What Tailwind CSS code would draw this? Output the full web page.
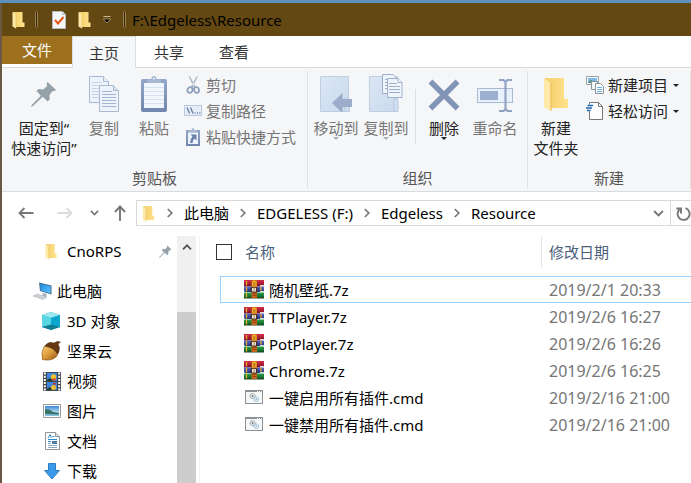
<!DOCTYPE html>
<html lang="zh-CN">
<head>
<meta charset="utf-8">
<meta name="viewport" content="width=device-width, initial-scale=1">
<title>F:\Edgeless\Resource</title>
<script src="https://cdn.jsdelivr.net/npm/@tailwindcss/browser@4"></script>
</head>
<body class="h-screen overflow-hidden bg-white font-['Noto_Sans','Noto_Sans_CJK_SC',sans-serif] text-[15px] leading-5 text-black">
<svg class="absolute h-0 w-0" aria-hidden="true">
  <defs>
    <linearGradient id="fold" x1="0" x2="1"><stop offset="0" stop-color="#f3cc68"/><stop offset="1" stop-color="#ffe38e"/></linearGradient>
    <linearGradient id="clip" x1="0" x2="0" y1="0" y2="1"><stop offset="0" stop-color="#93a6ca"/><stop offset="1" stop-color="#7186ad"/></linearGradient>
    <linearGradient id="box" x1="0" x2="1" y1="0" y2="1"><stop offset="0" stop-color="#dbe7f5"/><stop offset="1" stop-color="#cbd9ec"/></linearGradient>
    <linearGradient id="scr" x1="0" x2="1" y1="0" y2="1"><stop offset="0" stop-color="#1c8be0"/><stop offset="1" stop-color="#5cc4ff"/></linearGradient>
    <linearGradient id="nut" x1="0" x2="1" y1="0" y2="1"><stop offset="0" stop-color="#f7cf7e"/><stop offset=".5" stop-color="#db9a3c"/><stop offset="1" stop-color="#8f5010"/></linearGradient>
    <linearGradient id="red" x1="0" x2="0" y1="0" y2="1"><stop offset="0" stop-color="#d8304c"/><stop offset="1" stop-color="#7c0d20"/></linearGradient>
    <linearGradient id="blue" x1="0" x2="0" y1="0" y2="1"><stop offset="0" stop-color="#5868c8"/><stop offset="1" stop-color="#27307c"/></linearGradient>
    <linearGradient id="green" x1="0" x2="0" y1="0" y2="1"><stop offset="0" stop-color="#2fa04c"/><stop offset="1" stop-color="#0b5a22"/></linearGradient>
    <linearGradient id="pic" x1="0" x2="0" y1="0" y2="1"><stop offset="0" stop-color="#3f8bd8"/><stop offset=".7" stop-color="#bfe3f6"/></linearGradient>
  </defs>
  <symbol id="folder" viewBox="0 0 13 18"><path d="M4 2.500H10V15H4z" fill="#f0c866"/><path d="M1 1h9.500v10.500H12.500V16H4z" fill="url(#fold)"/><path d="M.5 1L4 3.500V17.500L.5 15.500z" fill="#ffe9a8"/><path d="M4 3.500V17.500" stroke="#e9bf5c" stroke-width=".6"/></symbol>
  <symbol id="pin" viewBox="0 0 26 26"><path d="M16.500 1L25 9l-2 1.200-1.500-.2-3 4 .2 4.500-2 2-5-4.800L2 25l-1.500.8L.300 24.500l9.500-9.700L5.500 10l2-2 4.700.5 4-3.500-.700-2z" fill="#94a1a8"/></symbol>
  <symbol id="chev" viewBox="0 0 10 6"><path d="M1 .7l4 4 4-4" fill="none" stroke="currentColor" stroke-width="1.800"/></symbol>
  <symbol id="next" viewBox="0 0 6 10"><path d="M.8 1l4 4-4 4" fill="none" stroke="#777" stroke-width="1.700"/></symbol>
  <symbol id="tri" viewBox="0 0 6 3"><path d="M0 0h6L3 3z" fill="currentColor"/></symbol>
  <symbol id="rar" viewBox="0 0 20 19">
    <path d="M0 0h20v5.500l-1 1H0z" fill="url(#red)"/><path d="M0 6.500h20V12H1L0 11z" fill="url(#blue)"/><path d="M0 12.500h20V18H0z" fill="url(#green)"/>
    <path d="M16 5h4v1.500h-4zM16 11h4v1h-4z" fill="#ddd"/><path d="M0 17.500h20v1H0z" fill="#174526"/>
    <path d="M2.500 1v4.500M2.500 7v4.500M2.500 13v4.500M17 7v3.500" stroke="#e8ac20" stroke-width="1.300"/>
    <path d="M7.500 0h5.500v18H7.500z" fill="#c8641a"/><path d="M8 1.500L10.200.2l2.300 1.300v5H8z" fill="#f2b32c"/><path d="M9 3h2.500M9 5h2.500M8.500 13.500h4M8.500 15.500h4" stroke="#8c3f10" stroke-width=".8"/>
    <rect x="6.500" y="7" width="7" height="5.500" rx="1.500" fill="#41332e"/><rect x="8" y="8" width="4" height="3.500" fill="#e8e8e8"/><path d="M10.200 7v4" stroke="#c9771e" stroke-width="1"/>
  </symbol>
  <symbol id="cmd" viewBox="0 0 18 15"><rect x=".5" y=".5" width="17" height="13" fill="#f7f8f9" stroke="#8b9095"/><path d="M1 1.500h16" stroke="#8b9095"/><path d="M12 1.500h1M14 1.500h1M16 1.500h.8" stroke="#fff"/>
    <circle cx="7.500" cy="6" r="2.600" fill="#e0e3e6" stroke="#8e959b" stroke-dasharray="1.200 .5"/><circle cx="7.500" cy="6" r=".9" fill="#777"/><circle cx="11.300" cy="9.300" r="2.300" fill="#e3f1f8" stroke="#81a9c0" stroke-dasharray="1.100 .5"/><circle cx="11.300" cy="9.300" r=".7" fill="#7ba0b5"/></symbol>
</svg>

<div class="flex h-full flex-col border-t-3 border-t-[#5c90bd]">
<div class="flex min-h-0 flex-1 flex-col border-l-2 border-l-[#6a5642]">

  <header class="flex h-[33px] shrink-0 items-center bg-[#644812]">
    <svg class="ml-[10px] h-[18px] w-[13px]"><use href="#folder"/></svg>
    <span class="ml-[10px] h-[17px] w-[3px] rounded-sm border border-[#96804f] bg-[#3b2a09]"></span>
    <button class="ml-[14px]" aria-label="属性"><svg class="h-[18px] w-[14px]" viewBox="0 0 14 18"><path d="M.5.5h10l3 3v14H.5z" fill="#f6f7f9" stroke="#b5bac0"/><path d="M10.500.5v3h3" fill="#dfe3e8" stroke="#b5bac0"/><path d="M3 9l3 3.500L11.500 6" fill="none" stroke="#e55412" stroke-width="2"/></svg></button>
    <button class="ml-[12px]" aria-label="新建文件夹"><svg class="h-[18px] w-[13px]"><use href="#folder"/></svg></button>
    <button class="ml-[12px]" aria-label="自定义快速访问工具栏"><svg class="h-[9px] w-[8px]" viewBox="0 0 8 9"><path d="M.5 1.500h7" stroke="#c7b68e"/><path d="M.3 4h7.400L4 8z" fill="#000" stroke="#c7b68e" stroke-width=".7"/></svg></button>
    <span class="ml-[12px] h-[17px] w-[3px] rounded-sm border border-[#96804f] bg-[#3b2a09]"></span>
    <h1 class="ml-[6px]">F:\Edgeless\Resource</h1>
  </header>

  <nav class="flex h-[31px] shrink-0 bg-white text-[#333]" aria-label="功能区">
    <button class="h-7 w-[70px] bg-[#9c701d] text-white">文件</button>
    <button class="relative -mb-px w-16 border border-b-0 border-[#d9dcdf] bg-[#f5f6f8]">主页</button>
    <button class="w-[66px]">共享</button>
    <button class="w-16">查看</button>
  </nav>

  <section class="flex h-[125px] shrink-0 border-y border-[#d9dcdf] bg-[#f5f6f8] py-[3px] text-[#757575]" aria-label="主页">
    <div class="flex w-[306px] shrink-0 flex-col border-r border-[#dfe1e3]">
      <div class="flex flex-1 pl-[6px] pt-[5px]">
        <button class="flex w-[72px] flex-col items-center text-[#222]"><svg class="mb-[6px] h-9 w-[26px]"><use href="#pin"/></svg>固定到“<br>快速访问”</button>
        <button class="flex w-12 flex-col items-center"><svg class="mb-[6px] h-9 w-[30px]" viewBox="0 0 30 36"><g fill="#edf3fb" stroke="#a9b9d3"><path d="M.5.5h14l5 5v21H.5z"/><path d="M14.500.5v5h5"/><path d="M3 6.500h10M3 9.500h12M3 12.500h12M3 15.500h12M3 18.500h12M3 21.500h12" stroke="#c8d5e8"/><path d="M10.500 9.500h14l5 5v21h-19z"/><path d="M24.500 9.500v5h5" fill="#d7e2f2"/><path d="M13 15.500h10M13 18.500h14M13 21.500h14M13 24.500h14M13 27.500h14M13 30.500h14" stroke="#a4b5d1"/></g></svg>复制</button>
        <button class="flex w-13 flex-col items-center"><svg class="mb-[6px] h-9 w-[26px]" viewBox="0 0 26 36"><rect y="3" width="26" height="33" rx="2" fill="url(#clip)"/><path d="M3 7h20v25H3z" fill="#f1f6fd"/><path d="M3 11.500h20M3 15.500h20M3 19.500h20M3 23.500h20M3 27.500h20" stroke="#d5e1f2"/><path d="M6 7V3.500h4.500Q10 0 13 0t2.500 3.500H20V7z" fill="#a8b8d2"/><circle cx="13" cy="2.500" r="1" fill="#eef3fa"/></svg>粘贴</button>
        <div class="-mt-1 flex flex-col pl-1">
          <button class="flex h-[26px] items-center"><svg class="mr-1 h-[18px] w-[18px]" viewBox="0 0 18 18"><path d="M4.500 0L6 .5l6 11-1.500 1zM14 0l-1.500.5-6 11 1.500 1z" fill="#a9b3c4"/><g fill="none" stroke="#8fa0bf" stroke-width="1.800"><ellipse cx="6" cy="14" rx="2.400" ry="2.900" transform="rotate(25 6 14)"/><ellipse cx="12.500" cy="14" rx="2.400" ry="2.900" transform="rotate(-25 12.500 14)"/></g></svg>剪切</button>
          <button class="flex h-[26px] items-center"><svg class="mr-1 h-[18px] w-[18px]" viewBox="0 0 18 18"><rect x=".5" y="3.500" width="17" height="10" fill="#e5edf8" stroke="#b9c8de"/><path d="M3 5.500l2.500 6M6.500 5.500L9 11.500M10.500 11h1M13 11h1M15.300 11h1" fill="none" stroke="#687b9d" stroke-width="1.300"/></svg>复制路径</button>
          <button class="flex h-[26px] items-center"><svg class="mr-1 h-[18px] w-[18px]" viewBox="0 0 18 18"><path d="M2 2h14v16H2z" fill="url(#clip)"/><path d="M4 4.500h10V16H4z" fill="#edf3fb"/><path d="M5 4V2h2.500Q8 0 9 0t1.500 2H13v2z" fill="#a8b8d2"/><path d="M6.500 6.500h6v6l-2-2q-2 1.500-2 4.500H6q0-4 2.500-6.500z" fill="#6880aa"/></svg>粘贴快捷方式</button>
        </div>
      </div>
      <h2 class="text-center text-[#555]">剪贴板</h2>
    </div>

    <div class="flex w-[220px] shrink-0 flex-col border-r border-[#dfe1e3]">
      <div class="flex flex-1 pl-[3px] pt-[5px]">
        <button class="flex w-[50px] flex-col items-center"><svg class="mb-[6px] h-9 w-[34px]" viewBox="0 0 34 36"><path d="M1.500 .5h28v35h-28z" fill="url(#box)" stroke="#bfcee5"/><path d="M26 22q3-2 4.500 1v12.500H26z" fill="#d0def0" stroke="#b9c9e0"/><path d="M13 27L23.500 17v6H33v8H23.500v6z" fill="#9cadcb"/></svg>移动到<svg class="-mt-px h-[3px] w-[6px] text-[#b0b0b0]"><use href="#tri"/></svg></button>
        <button class="flex w-[50px] flex-col items-center"><svg class="mb-[6px] h-[38px] -mt-[2px] w-[34px]" viewBox="0 0 34 38"><path d="M.5 2.500h28v35H.5z" fill="url(#box)" stroke="#bfcee5"/><path d="M25 26q2-3 4 0v11.500h-4z" fill="#d0def0" stroke="#b9c9e0"/><g fill="#f0f5fc" stroke="#9eafcb"><path d="M13.500.5H24l3 3v16H13.500z"/><path d="M16 5.500h6M16 8.500h6M16 11.500h6M16 14.500h6"/><path d="M18.500 4.500H29l4 4v15H18.500z"/><path d="M29 4.500v4h4"/><path d="M20 9.500h8M20 12.500h11M20 15.500h11M20 18.500h11"/></g></svg>复制到<svg class="-mt-px h-[3px] w-[6px] text-[#b0b0b0]"><use href="#tri"/></svg></button>
        <span class="mx-1 mt-[13px] h-[55px] w-px bg-[#dcdee1]"></span>
        <button class="flex w-[48px] flex-col items-center text-[#222]"><svg class="mb-[6px] h-9 w-[32px]" viewBox="0 0 32 36"><path d="M2.500 5.500l27 27M29.500 5.500l-27 27" stroke="#8294b6" stroke-width="5.500"/></svg>删除<svg class="-mt-px h-[3px] w-[6px]"><use href="#tri"/></svg></button>
        <button class="flex w-[54px] flex-col items-center"><svg class="mb-[6px] h-9 w-[36px]" viewBox="0 0 36 36"><rect x=".5" y="12.500" width="35" height="14" fill="#e8f0fb" stroke="#a9bad5"/><path d="M3 15h18v9H3z" fill="#9dafce"/><path d="M22 4h4.500L28.500 6l2-2H35M22 35h4.500l2-2 2 2H35M28.500 6v27" fill="none" stroke="#92a4c5" stroke-width="2.200"/></svg>重命名</button>
      </div>
      <h2 class="text-center text-[#555]">组织</h2>
    </div>

    <div class="flex w-[163px] shrink-0 flex-col border-r border-[#dfe1e3]">
      <div class="flex flex-1 pl-[3px] pt-[5px] text-[#222]">
        <button class="flex w-[50px] flex-col items-center"><svg class="mb-[6px] h-9 w-[26px]"><use href="#folder"/></svg>新建<br>文件夹</button>
        <div class="-mt-1 flex flex-col pl-[5px]">
          <button class="flex h-[26px] items-center"><svg class="mr-1 h-[18px] w-[18px]" viewBox="0 0 18 18"><path d="M.5.5h12v8H.5z" fill="#fff" stroke="#98a0a8"/><path d="M2 2h9v5H2z" fill="#7dbbe6"/><path d="M2 7l3-3 6 3z" fill="#4d8b70"/><path d="M5.500 5.500h6v8h-6z" fill="#f7f9fb" stroke="#8b939a"/><path d="M9.500 7.500h5l3 3v7h-8z" fill="#fff" stroke="#8b939a"/><path d="M11 11.500h5M11 13.500h5M11 15.500h5" stroke="#69aee1"/></svg>新建项目<svg class="ml-[5px] h-[3px] w-[6px]"><use href="#tri"/></svg></button>
          <button class="flex h-[26px] items-center"><svg class="mr-1 h-[18px] w-[18px]" viewBox="0 0 18 18"><path d="M3.500.5h9l4 4v13h-13z" fill="#fff" stroke="#777"/><path d="M12.500.5v4h4" fill="none" stroke="#777"/><path d="M2 2.500h4v7H2z" fill="#f5f6f8"/><path d="M1.500 3.500H7M0 6h6M1 8.500h3.500" stroke="#2368ad" stroke-width="1.400"/></svg>轻松访问<svg class="ml-[5px] h-[3px] w-[6px]"><use href="#tri"/></svg></button>
        </div>
      </div>
      <h2 class="text-center text-[#555]">新建</h2>
    </div>
  </section>

  <div class="flex h-11 shrink-0 items-start overflow-hidden pt-2">
    <div class="flex h-[26px] w-[134px] shrink-0 items-center text-[#777]">
      <button class="ml-4" aria-label="后退"><svg class="h-3 w-4" viewBox="0 0 16 12"><path d="M15.500 6H1.500M6.500 1l-5 5 5 5" fill="none" stroke="currentColor" stroke-width="1.800"/></svg></button>
      <button class="ml-[23px] text-[#dcdcdc]" aria-label="前进"><svg class="h-3 w-4" viewBox="0 0 16 12"><path d="M.5 6h14M9.500 1l5 5-5 5" fill="none" stroke="currentColor" stroke-width="1.800"/></svg></button>
      <button class="ml-[17px]" aria-label="最近位置"><svg class="h-[6px] w-[9px]"><use href="#chev"/></svg></button>
      <button class="ml-[15px]" aria-label="上移"><svg class="h-4 w-3" viewBox="0 0 12 16"><path d="M6 16V1.500M1 7l5-5.500L11 7" fill="none" stroke="currentColor" stroke-width="1.900"/></svg></button>
    </div>
    <div class="flex h-[26px] min-w-0 flex-1 items-center border border-r-0 border-[#d9d9d9]">
      <svg class="ml-[5px] h-[17px] w-[13px] shrink-0"><use href="#folder"/></svg>
      <svg class="ml-3 h-[10px] w-[6px] shrink-0"><use href="#next"/></svg>
      <a href="#" class="ml-[11px]">此电脑</a>
      <svg class="ml-[11px] h-[10px] w-[6px] shrink-0"><use href="#next"/></svg>
      <a href="#" class="ml-[11px] whitespace-nowrap">EDGELESS (F:)</a>
      <svg class="ml-[11px] h-[10px] w-[6px] shrink-0"><use href="#next"/></svg>
      <a href="#" class="ml-[11px]">Edgeless</a>
      <svg class="ml-[11px] h-[10px] w-[6px] shrink-0"><use href="#next"/></svg>
      <a href="#" class="ml-[11px]">Resource</a>
      <button class="ml-auto mr-[6px] text-[#777]" aria-label="以前的位置"><svg class="h-[7px] w-[11px]"><use href="#chev"/></svg></button>
      <button class="flex h-full w-[21px] shrink-0 items-center overflow-hidden border-l border-[#d9d9d9] pl-[5px]" aria-label="刷新"><svg class="h-[15px] w-[15px] shrink-0" viewBox="0 0 15 15"><path d="M9.500 2.200A6 6 0 1 1 3.500 3.500M.5 2.500h4.500v5" fill="none" stroke="#777" stroke-width="1.900"/></svg></button>
    </div>
  </div>

  <main class="flex min-h-0 flex-1">
    <nav class="w-[175px] shrink-0 overflow-hidden" aria-label="导航窗格">
      <ul>
        <li class="mb-[10px]"><a href="#" class="flex h-[30px] items-center pl-[43px]"><svg class="mr-[10px] h-[17px] w-[12px]"><use href="#folder"/></svg>CnoRPS<svg class="ml-auto mr-[5px] h-[13px] w-[13px]"><use href="#pin"/></svg></a></li>
        <li><a href="#" class="flex h-[30px] items-center pl-[31px]"><svg class="mr-[5px] h-[18px] w-[19px]" viewBox="0 0 19 18"><path d="M6 .5l12.500 3v9L7 9z" fill="#446d93"/><path d="M7 1.700L17.500 4.300v7L8 8.500z" fill="url(#scr)"/><path d="M10 11l4 1-1 3-4-1z" fill="#a8b2bc"/><path d="M0 14l4-2 10 3-4 2.500z" fill="#cdd3d8" stroke="#a5acb2" stroke-width=".5"/></svg>此电脑</a></li>
        <li><a href="#" class="flex h-[30px] items-center pl-[40px]"><svg class="mr-[7px] h-[18px] w-[18px]" viewBox="0 0 18 18"><path d="M0 3L9 0l9 3v12l-9 3-9-3z" fill="#29a9c6"/><path d="M0 3L9 0l9 3-9 3z" fill="#9be8ef"/><path d="M0 3l9 3v7l-9 2z" fill="#56d5e3"/><path d="M9 6l9-3v12l-9-2z" fill="#0da7cd"/><path d="M0 15l9-2.500 9 2.500-9 3z" fill="#127c91"/></svg>3D 对象</a></li>
        <li><a href="#" class="flex h-[30px] items-center pl-[39px]"><svg class="mr-[6px] h-[20px] w-[20px]" viewBox="0 0 20 20"><path d="M3.500 5Q-.5 11 1.500 18.500q9 2 14-3Q18 12 17 8z" fill="url(#nut)" stroke="#9a5d1a" stroke-width=".7"/><path d="M4 5Q7 0 13 2l3-1.500 3.500.5-2.500 2Q20 8 16.500 13 13 6.500 4 5z" fill="#653812" stroke="#42230a" stroke-width=".5"/></svg>坚果云</a></li>
        <li><a href="#" class="flex h-[30px] items-center pl-[41px]"><svg class="mr-[6px] h-[19px] w-[18px]" viewBox="0 0 18 19"><path d="M0 0h18v19H0z" fill="#41464a"/><path d="M1.800.5v18M16.200.5v18" stroke="#fff" stroke-width="2" stroke-dasharray="2 1.200"/><path d="M4 1h10v8H4zM4 10h10v8H4z" fill="#3e84e2"/><circle cx="10.500" cy="5" r="2.700" fill="#f2c723"/><path d="M9 6.500h4v2H9z" fill="#d44732"/><path d="M4 8l3-2 3 3H4zM4 17l3-2 3 3H4z" fill="#223b25"/><circle cx="10.500" cy="15.500" r="2.500" fill="#efbc2d"/><path d="M10 11h3v1.500h-3z" fill="#bd3430"/></svg>视频</a></li>
        <li><a href="#" class="flex h-[30px] items-center pl-[41px]"><svg class="mr-[6px] h-[14px] w-[18px]" viewBox="0 0 18 14"><path d="M.5.5h17v13H.5z" fill="#fff" stroke="#979ca0"/><path d="M2 2h14v10H2z" fill="url(#pic)"/><path d="M2 5q5 0 8 3l6 1v3H2z" fill="#387369"/><path d="M2 10l14 .5V12H2z" fill="#85c1dd"/></svg>图片</a></li>
        <li><a href="#" class="flex h-[30px] items-center pl-[43px]"><svg class="mr-[7px] h-[18px] w-[15px]" viewBox="0 0 15 18"><path d="M.5.5h10l4 4v13H.5z" fill="#fff" stroke="#8f9499"/><path d="M10.500.5v4h4" fill="#dde1e5" stroke="#8f9499"/><path d="M3 6l2-3.500L6.500 6M7.500 4.500h2M3 7.500h9M3 9.500h3M3 13.500h9M3 15.500h6" fill="none" stroke="#278bc6"/><path d="M7 9h5v3H7z" fill="#477faa"/><path d="M3 11.500h3M3 13.500h9M3 15.500h9" stroke="#8faaba"/></svg>文档</a></li>
        <li><a href="#" class="flex h-[30px] items-center pl-[42px]"><svg class="mr-[7px] h-[17px] w-[16px]" viewBox="0 0 16 17"><path d="M4.500.5h7v7h4L8 16 .5 7.500h4z" fill="#3d9ae8" stroke="#2a7fc9"/></svg>下载</a></li>
      </ul>
    </nav>
    <div class="flex w-[19px] shrink-0 flex-col bg-[#f0f0f0]">
      <button class="flex h-[22px] items-center justify-center text-[#555]" aria-label="向上滚动"><svg class="h-[6px] w-[10px] rotate-180"><use href="#chev"/></svg></button>
      <div class="mt-[54px] flex-1 bg-[#cdcdcd]"></div>
    </div>
    <section class="ml-[3px] min-w-0 flex-1 border-l border-[#f2f2f2] pl-5">
      <table class="w-full table-fixed border-separate border-spacing-0 text-left">
        <thead class="text-[#4c607a]">
          <tr>
            <th class="w-[322px] p-0 pb-2 font-normal"><div class="-ml-1 flex h-8 items-center border-r border-[#e5e5e5]"><input type="checkbox" id="all" aria-label="全选" class="h-4 w-4 appearance-none border border-[#333] bg-white"><span class="ml-[13px]">名称</span></div></th>
            <th class="p-0 pb-2 pl-[7px] font-normal">修改日期</th>
          </tr>
        </thead>
        <tbody class="[&_td]:h-[27px] [&_td]:p-0">
          <tr class="[&>td]:border-y [&>td]:border-[#99d1ff]"><td class="border-l"><a href="#" class="flex items-center pl-[23px]"><svg class="mr-[5px] h-[19px] w-5"><use href="#rar"/></svg>随机壁纸.7z</a></td><td class="pl-[7px]! text-base/5 text-[#767676]">2019/2/1 20:33</td></tr>
          <tr><td><a href="#" class="flex items-center pl-6"><svg class="mr-[5px] h-[19px] w-5"><use href="#rar"/></svg>TTPlayer.7z</a></td><td class="pl-[7px]! text-base/5 text-[#767676]">2019/2/6 16:27</td></tr>
          <tr><td><a href="#" class="flex items-center pl-6"><svg class="mr-[5px] h-[19px] w-5"><use href="#rar"/></svg>PotPlayer.7z</a></td><td class="pl-[7px]! text-base/5 text-[#767676]">2019/2/6 16:26</td></tr>
          <tr><td><a href="#" class="flex items-center pl-6"><svg class="mr-[5px] h-[19px] w-5"><use href="#rar"/></svg>Chrome.7z</a></td><td class="pl-[7px]! text-base/5 text-[#767676]">2019/2/6 16:25</td></tr>
          <tr><td><a href="#" class="flex items-center pl-[25px]"><svg class="mr-[6px] h-[15px] w-[18px]"><use href="#cmd"/></svg>一键启用所有插件.cmd</a></td><td class="pl-[7px]! text-base/5 text-[#767676]">2019/2/16 21:00</td></tr>
          <tr><td><a href="#" class="flex items-center pl-[25px]"><svg class="mr-[6px] h-[15px] w-[18px]"><use href="#cmd"/></svg>一键禁用所有插件.cmd</a></td><td class="pl-[7px]! text-base/5 text-[#767676]">2019/2/16 21:00</td></tr>
        </tbody>
      </table>
    </section>
  </main>
</div>
</div>
</body>
</html>
